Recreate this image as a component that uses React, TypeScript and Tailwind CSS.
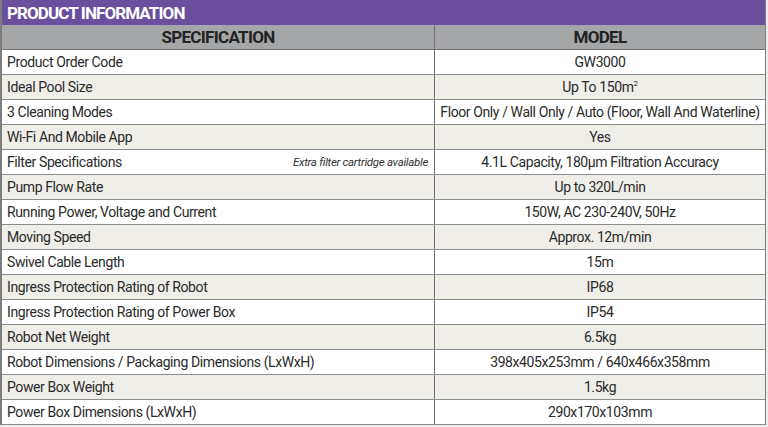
import React from "react";

const rows: { spec: string; note?: string; model: React.ReactNode }[] = [
  { spec: "Product Order Code", model: "GW3000" },
  { spec: "Ideal Pool Size", model: <>Up To 150m<span className="text-[8px] align-top relative top-[-3px]">2</span></> },
  { spec: "3 Cleaning Modes", model: "Floor Only / Wall Only / Auto (Floor, Wall And Waterline)" },
  { spec: "Wi-Fi And Mobile App", model: "Yes" },
  { spec: "Filter Specifications", note: "Extra filter cartridge available", model: "4.1L Capacity, 180µm Filtration Accuracy" },
  { spec: "Pump Flow Rate", model: "Up to 320L/min" },
  { spec: "Running Power, Voltage and Current", model: "150W, AC 230-240V, 50Hz" },
  { spec: "Moving Speed", model: "Approx. 12m/min" },
  { spec: "Swivel Cable Length", model: "15m" },
  { spec: "Ingress Protection Rating of Robot", model: "IP68" },
  { spec: "Ingress Protection Rating of Power Box", model: "IP54" },
  { spec: "Robot Net Weight", model: "6.5kg" },
  { spec: "Robot Dimensions / Packaging Dimensions (LxWxH)", model: "398x405x253mm / 640x466x358mm" },
  { spec: "Power Box Weight", model: "1.5kg" },
  { spec: "Power Box Dimensions (LxWxH)", model: "290x170x103mm" },
];

export default function App() {
  return (
    <div
      className="w-[768px] h-[427px] bg-[#ececec] overflow-hidden whitespace-nowrap"
      style={{ fontFamily: 'Roboto, "DejaVu Sans Condensed", "Liberation Sans", sans-serif' }}
    >
      <div className="w-[766px] border-l-2 border-r border-[#7d7d7d] bg-white">
        <div className="h-[25px] bg-[#6a4f9f] text-white font-bold text-[17px] leading-[26px] pl-[5px] tracking-[-0.9px]">
          PRODUCT INFORMATION
        </div>
        <div className="flex h-[25px] bg-[#a5a6a8] border-b border-[#6f6f6f] text-[#222] font-bold text-[17px] leading-[25px] tracking-[-0.7px]">
          <div className="w-[433px] text-center border-r border-[#6f6f6f]">SPECIFICATION</div>
          <div className="flex-1 text-center">MODEL</div>
        </div>
        {rows.map((r, i) => (
          <div
            key={i}
            className={`flex h-[25px] border-b border-[#8c8c8c] text-[#2a2a2a] text-[14px] leading-[24px] tracking-[-0.4px] ${
              i % 2 === 0 ? "bg-white" : "bg-[#efeee9]"
            }`}
          >
            <div className="w-[433px] flex justify-between pl-[5px] pr-[6px] border-r border-[#6f6f6f]">
              <span>{r.spec}</span>
              {r.note && <span className="italic text-[11.5px] text-[#333] tracking-[-0.3px]">{r.note}</span>}
            </div>
            <div className="flex-1 text-center">{r.model}</div>
          </div>
        ))}
      </div>
    </div>
  );
}
